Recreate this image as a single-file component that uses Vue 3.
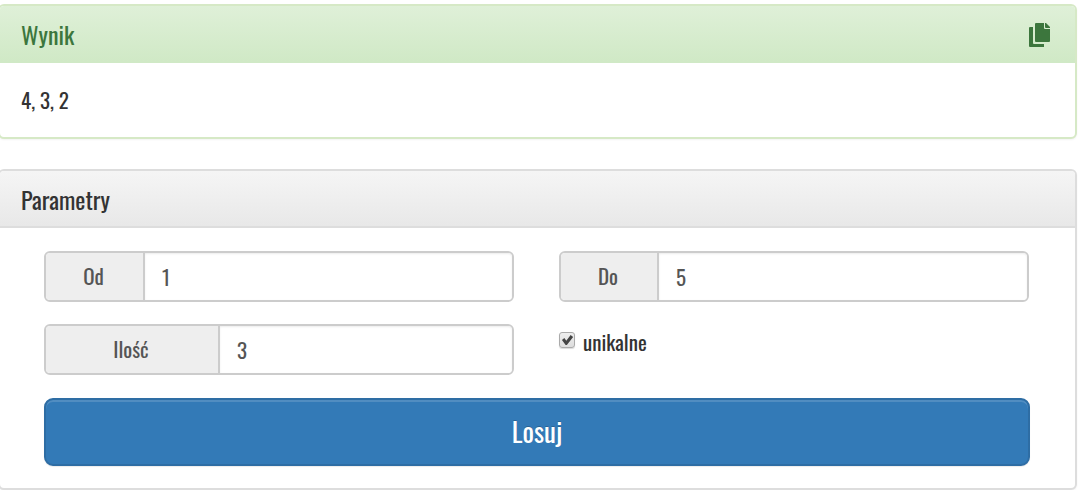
<script setup>
import { ref } from 'vue'

const from = ref('1')
const to = ref('5')
const count = ref('3')
const unique = ref(true)
const result = ref([4, 3, 2])

function draw() {
  const low = Number(from.value)
  const high = Number(to.value)
  let pool = []
  for (let n = low; n <= high; n++) pool.push(n)
  const drawn = []
  while (drawn.length < Number(count.value) && pool.length) {
    const index = Math.floor(Math.random() * pool.length)
    drawn.push(pool[index])
    if (unique.value) pool.splice(index, 1)
  }
  result.value = drawn
}

function copy() {
  navigator.clipboard?.writeText(result.value.join(', '))
}
</script>

<template>
  <main class="page">
    <section class="panel success">
      <header class="heading">
        <h2>Wynik</h2>
        <button class="copy" type="button" aria-label="Kopiuj" @click="copy">
          <svg viewBox="0 0 22 24" width="22" height="24" aria-hidden="true">
            <path d="M0 5Q0 4 1 4H4V20Q4 21 5 21H15V24H1Q0 24 0 23Z" />
            <path d="M6 1Q6 0 7 0H15V5Q15 6 16 6H21V18Q21 19 20 19H7Q6 19 6 18Z" />
            <path d="M16 0H17L21 4V5H17Q16 5 16 4Z" />
          </svg>
        </button>
      </header>
      <p class="result">{{ result.join(', ') }}</p>
    </section>

    <section class="panel">
      <header class="heading">
        <h2>Parametry</h2>
      </header>
      <form class="form" @submit.prevent="draw">
        <div class="fields">
          <div class="group">
            <label class="addon" for="from">Od</label>
            <input id="from" v-model="from" type="text" class="control" />
          </div>
          <div class="group">
            <label class="addon narrow" for="to">Do</label>
            <input id="to" v-model="to" type="text" class="control" />
          </div>
          <div class="group">
            <label class="addon wide" for="count">Ilość</label>
            <input id="count" v-model="count" type="text" class="control" />
          </div>
          <div class="check">
            <input id="unique" v-model="unique" type="checkbox" />
            <label for="unique">unikalne</label>
          </div>
        </div>
        <button class="submit" type="submit">Losuj</button>
      </form>
    </section>
  </main>
</template>

<style>
body {
  background: #fff;
}
</style>

<style scoped>
.page,
.page * {
  box-sizing: border-box;
}

.page {
  display: flex;
  flex-direction: column;
  gap: 30px;
  margin: 0 2px 0 -2px;
  padding-top: 4px;
  color: #333;
  font-family: Oswald, "Liberation Sans Narrow", "Roboto Condensed", sans-serif;
  font-size: 21px;
  font-weight: 400;
  line-height: 30px;
}

.panel {
  border: 2px solid #ddd;
  border-radius: 6px;
  background: #fff;
  box-shadow: 0 1px 2px rgba(0, 0, 0, 0.05);
}

.heading {
  display: flex;
  align-items: center;
  justify-content: space-between;
  height: 57px;
  padding: 0 24px 0 21px;
  border-bottom: 2px solid #ddd;
  border-radius: 4px 4px 0 0;
  background: linear-gradient(#f5f5f5, #e8e8e8);
}

.heading h2 {
  margin: 0;
  font-size: 24px;
  font-weight: 400;
}

.success {
  border-color: #d6e9c6;
}

.success .heading {
  border-bottom-color: #d0e9c6;
  background: linear-gradient(#dff0d8, #d0e9c6);
  color: #3c763d;
}

.copy {
  display: flex;
  padding: 2px 0 0;
  border: 0;
  background: none;
  color: inherit;
  cursor: pointer;
}

.copy svg {
  fill: currentColor;
}

.result {
  margin: 0;
  padding: 22px 21px;
}

.form {
  padding: 23px 45px 22px 44px;
}

.fields {
  display: grid;
  grid-template-columns: 1fr 1fr;
  gap: 22px 45px;
  margin: 0 1px 23px 0;
}

.group {
  display: flex;
  height: 51px;
  border: 2px solid #ccc;
  border-radius: 6px;
  background: #fff;
}

.addon {
  display: flex;
  flex: none;
  align-items: center;
  justify-content: center;
  width: 99px;
  padding: 0 2px 1px 0;
  border-right: 2px solid #ccc;
  border-radius: 4px 0 0 4px;
  background: #eee;
  color: #555;
}

.addon.narrow {
  width: 98px;
}

.addon.wide {
  width: 174px;
}

.control {
  flex: 1;
  min-width: 0;
  padding: 0 17px;
  border: 0;
  border-radius: 0 4px 4px 0;
  outline: 0;
  background: #fff;
  box-shadow: inset 0 1px 2px rgba(0, 0, 0, 0.08);
  color: #555;
  font: inherit;
}

.check {
  display: flex;
  align-items: center;
  align-self: start;
  gap: 8px;
  height: 36px;
}

.check input {
  appearance: none;
  width: 16px;
  height: 16px;
  margin: 0 0 4px;
  border: 1px solid #aaa;
  border-radius: 3px;
  background: linear-gradient(#eee, #ddd);
  box-shadow: 0 1px 1px rgba(0, 0, 0, 0.15);
}

.check input:checked::before {
  display: block;
  width: 14px;
  height: 14px;
  background: #444;
  clip-path: polygon(14% 50%, 31% 36%, 45% 56%, 76% 14%, 94% 28%, 49% 86%, 40% 86%);
  content: "";
}

.submit {
  display: block;
  width: 100%;
  height: 68px;
  padding: 0 0 2px;
  border: 2px solid #2e6da4;
  border-radius: 9px;
  background: #337ab7;
  box-shadow: inset 0 2px 0 rgba(255, 255, 255, 0.15), 0 1px 1px rgba(0, 0, 0, 0.08);
  color: #fff;
  font: inherit;
  font-size: 27px;
  text-shadow: 0 -1px 0 rgba(0, 0, 0, 0.2);
  cursor: pointer;
}
</style>
